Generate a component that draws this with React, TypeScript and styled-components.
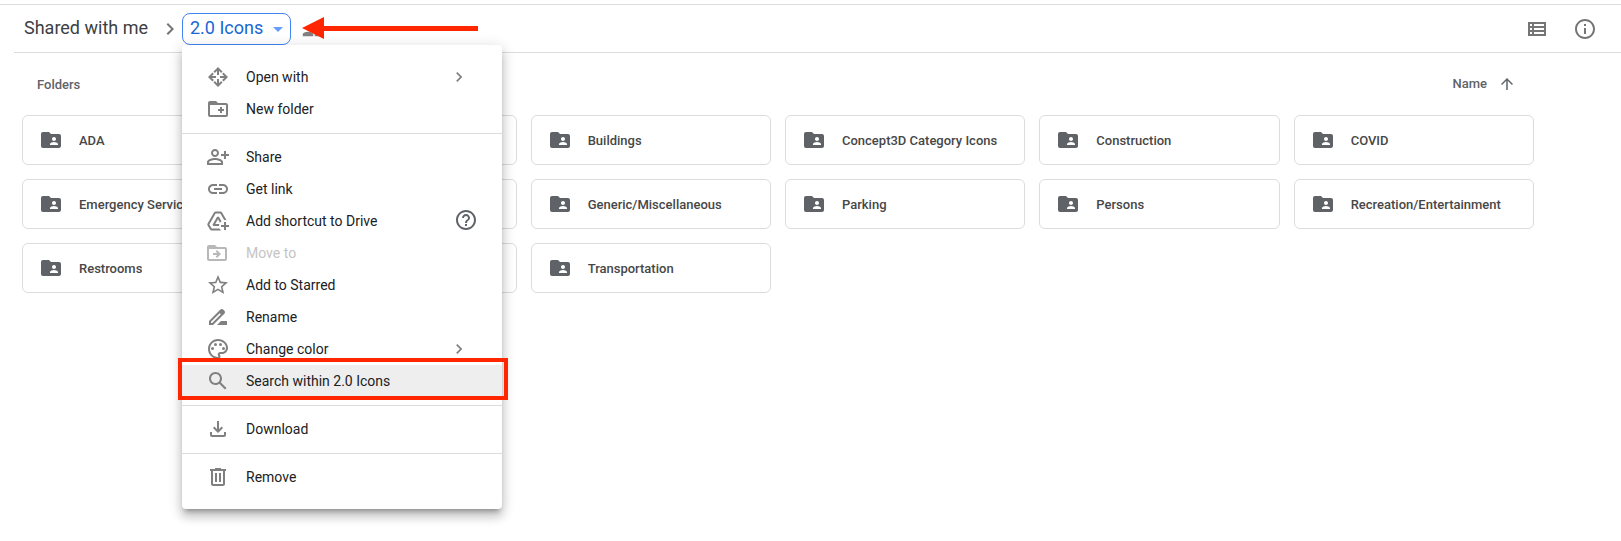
import React from 'react';
import styled, { createGlobalStyle, css } from 'styled-components';

const GlobalStyle = createGlobalStyle`
  *, *::before, *::after { box-sizing: border-box; }
  body {
    margin: 0;
    background: #fff;
    color: #202124;
    font-family: Roboto, "Liberation Sans", sans-serif;
    font-size: 14px;
  }
  button { font: inherit; color: inherit; background: none; border: 0; padding: 0; cursor: pointer; }
`;

const paths = {
  move: 'M12 2 7.5 6.5l1.4 1.4L11 5.8V10h2V5.8l2.1 2.1 1.4-1.4zM2 12l4.5 4.5 1.4-1.4L5.8 13H10v-2H5.8l2.1-2.1-1.4-1.4zM22 12l-4.5-4.5-1.4 1.4 2.1 2.1H14v2h4.2l-2.1 2.1 1.4 1.4zM12 22l4.5-4.5-1.4-1.4-2.1 2.1V14h-2v4.2l-2.1-2.1-1.4 1.4z',
  newFolder: 'M20 6h-8l-2-2H4c-1.1 0-2 .9-2 2v12c0 1.1.9 2 2 2h16c1.1 0 2-.9 2-2V8c0-1.1-.9-2-2-2zm0 12H4V8h16v10zm-8-4h2v2h2v-2h2v-2h-2v-2h-2v2h-2v2z',
  share: 'M9 12c2.21 0 4-1.79 4-4s-1.79-4-4-4-4 1.79-4 4 1.79 4 4 4zm0-6c1.1 0 2 .9 2 2s-.9 2-2 2-2-.9-2-2 .9-2 2-2zm0 7c-2.67 0-8 1.34-8 4v3h16v-3c0-2.66-5.33-4-8-4zm6 5H3v-.99C3.2 16.29 6.3 15 9 15s5.8 1.29 6 2v1zM20 9V6h-2v3h-3v2h3v3h2v-3h3V9z',
  link: 'M3.9 12c0-1.71 1.39-3.1 3.1-3.1h4V7H7c-2.76 0-5 2.24-5 5s2.24 5 5 5h4v-1.9H7c-1.71 0-3.1-1.39-3.1-3.1zM8 13h8v-2H8v2zm9-6h-4v1.9h4c1.71 0 3.1 1.39 3.1 3.1s-1.39 3.1-3.1 3.1h-4V17h4c2.76 0 5-2.24 5-5s-2.24-5-5-5z',
  shortcut: 'M20 21v-3h3v-2h-3v-3h-2v3h-3v2h3v3h2zm-4.97.5H5.66c-.72 0-1.38-.38-1.74-1L1.57 16.4c-.36-.62-.35-1.38.01-2L7.92 3.49C8.28 2.88 8.94 2.5 9.65 2.5h4.7c.71 0 1.37.38 1.73.99l4.48 7.71c-.5-.13-1.02-.2-1.56-.2-.28 0-.56.02-.84.06L14.35 4.5h-4.7L3.31 15.41l2.35 4.09h7.89c.35.77.85 1.44 1.48 2zM13.34 15C13.12 15.63 13 16.3 13 17H7.25l-.73-1.27 4.58-7.98h1.8l2.53 4.42c-.56.42-1.05.93-1.44 1.51l-2-3.49L9.25 15h4.09z',
  moveTo: 'M19 6h-8L9 4H3c-1.1 0-2 .9-2 2v12c0 1.1.9 2 2 2h16c1.1 0 2-.9 2-2V8c0-1.1-.9-2-2-2zm0 12H3V8h16v10zm-8-1 4-4-4-4-1.4 1.4 1.6 1.6H7v2h4.2l-1.6 1.6z',
  star: 'M22 9.24l-7.19-.62L12 2 9.19 8.63 2 9.24l5.46 4.73L5.82 21 12 17.27 18.18 21l-1.63-7.03L22 9.24zM12 15.4l-3.76 2.27 1-4.28-3.32-2.88 4.38-.38L12 6.1l1.71 4.04 4.38.38-3.32 2.88 1 4.28L12 15.4z',
  rename: 'M18.41 5.8 17.2 4.59c-.78-.78-2.05-.78-2.83 0l-2.68 2.68L3 15.96V20h4.04l8.74-8.74 2.63-2.63c.79-.78.79-2.05 0-2.83zM6.21 18H5v-1.21l8.66-8.66 1.21 1.21L6.21 18zM11 20l4-4h6v4H11z',
  palette: 'M12 22C6.49 22 2 17.51 2 12S6.49 2 12 2s10 4.04 10 9c0 3.31-2.69 6-6 6h-1.77c-.28 0-.5.22-.5.5 0 .12.05.23.13.33.41.47.64 1.06.64 1.67 0 1.38-1.12 2.5-2.5 2.5zm0-18c-4.41 0-8 3.59-8 8s3.59 8 8 8c.28 0 .5-.22.5-.5 0-.16-.08-.28-.14-.35-.41-.46-.63-1.05-.63-1.65 0-1.38 1.12-2.5 2.5-2.5H16c2.21 0 4-1.79 4-4 0-3.86-3.59-7-8-7zM6.5 10a1.5 1.5 0 1 0 0 3 1.5 1.5 0 0 0 0-3zM9.5 6a1.5 1.5 0 1 0 0 3 1.5 1.5 0 0 0 0-3zM14.5 6a1.5 1.5 0 1 0 0 3 1.5 1.5 0 0 0 0-3zM17.5 10a1.5 1.5 0 1 0 0 3 1.5 1.5 0 0 0 0-3z',
  search: 'M20.49 19l-5.73-5.73C15.53 12.2 16 10.91 16 9.5 16 5.91 13.09 3 9.5 3S3 5.91 3 9.5 5.91 16 9.5 16c1.41 0 2.7-.47 3.77-1.24L19 20.49 20.49 19zM5 9.5C5 7.01 7.01 5 9.5 5S14 7.01 14 9.5 11.99 14 9.5 14 5 11.99 5 9.5z',
  download: 'M4 15h2v3h12v-3h2v3c0 1.1-.9 2-2 2H6c-1.1 0-2-.9-2-2m11.59-8.41L13 12.17V4h-2v8.17L8.41 9.59 7 11l5 5 5-5-1.41-1.41z',
  remove: 'M15 4V3H9v1H4v2h1v13c0 1.1.9 2 2 2h10c1.1 0 2-.9 2-2V6h1V4h-5zm2 15H7V6h10v13zM9 8h2v9H9zm4 0h2v9h-2z',
  chevron: 'M10 6 8.59 7.41 13.17 12l-4.58 4.59L10 18l6-6z',
  help: 'M11 18h2v-2h-2v2zm1-16C6.48 2 2 6.48 2 12s4.48 10 10 10 10-4.48 10-10S17.52 2 12 2zm0 18c-4.41 0-8-3.59-8-8s3.59-8 8-8 8 3.59 8 8-3.59 8-8 8zm0-14c-2.21 0-4 1.79-4 4h2c0-1.1.9-2 2-2s2 .9 2 2c0 2-3 1.75-3 5h2c0-2.25 3-2.5 3-5 0-2.21-1.79-4-4-4z',
  info: 'M11 17h2v-6h-2v6zm1-15C6.48 2 2 6.48 2 12s4.48 10 10 10 10-4.48 10-10S17.52 2 12 2zm0 18c-4.41 0-8-3.59-8-8s3.59-8 8-8 8 3.59 8 8-3.59 8-8 8zM11 9h2V7h-2v2z',
  list: 'M3 5v14h18V5H3zm4 2v2H5V7h2zm-2 6v-2h2v2H5zm0 2h2v2H5v-2zm14 2H9v-2h10v2zm0-4H9v-2h10v2zm0-4H9V7h10v2z',
  up: 'M4 12l1.41 1.41L11 7.83V20h2V7.83l5.58 5.59L20 12l-8-8-8 8z',
  caret: 'M7 10l5 5 5-5z',
  people: 'M16 11c1.66 0 2.99-1.34 2.99-3S17.66 5 16 5c-1.66 0-3 1.34-3 3s1.34 3 3 3zm-8 0c1.66 0 2.99-1.34 2.99-3S9.66 5 8 5C6.34 5 5 6.34 5 8s1.34 3 3 3zm0 2c-2.33 0-7 1.17-7 3.5V19h14v-2.5c0-2.33-4.67-3.5-7-3.5zm8 0c-.29 0-.62.02-.97.05 1.16.84 1.97 1.97 1.97 3.45V19h6v-2.5c0-2.33-4.67-3.5-7-3.5z',
  sharedFolder: 'M20 6h-8l-2-2H4c-1.1 0-1.99.9-1.99 2L2 18c0 1.1.9 2 2 2h16c1.1 0 2-.9 2-2V8c0-1.1-.9-2-2-2zm-5 3c1.1 0 2 .9 2 2s-.9 2-2 2-2-.9-2-2 .9-2 2-2zm4 8h-8v-1c0-1.33 2.67-2 4-2s4 .67 4 2v1z',
};
type IconName = keyof typeof paths;

const Svg = styled.svg`
  display: block;
  flex: none;
  fill: currentColor;
`;
const Icon = ({ name, size = 24 }: { name: IconName; size?: number }) => (
  <Svg width={size} height={size} viewBox="0 0 24 24" aria-hidden="true">
    <path d={paths[name]} />
  </Svg>
);

const Page = styled.div`
  min-height: 100vh;
  padding-top: 4px;
`;
const Toolbar = styled.header`
  display: flex;
  align-items: center;
  justify-content: space-between;
  height: 49px;
  border-top: 1px solid #dadce0;
  padding-left: 14px;
  position: relative;
  &::after {
    content: '';
    position: absolute;
    left: 14px;
    right: 0;
    bottom: 0;
    border-bottom: 1px solid #dadce0;
  }
`;
const Breadcrumbs = styled.nav`
  display: flex;
  align-items: center;
  padding-left: 10px;
  color: #757575;
`;
const Crumb = styled.a`
  width: 134px;
  padding-bottom: 2px;
  color: #3c4043;
  font-size: 18px;
  line-height: 24px;
  text-decoration: none;
`;
const CrumbMenu = styled.div`
  position: relative;
  margin-right: 11px;
`;
const CurrentCrumb = styled.button`
  display: flex;
  align-items: center;
  justify-content: space-between;
  width: 109px;
  height: 32px;
  padding: 0 0 2px 7px;
  border: 1px solid #4285f4;
  border-radius: 8px;
  color: #1967d2;
  font-size: 18px;
  line-height: 24px;
  svg { margin-top: 2px; color: #669df6; }
`;
const SharedMark = styled.span`
  position: relative;
  padding-top: 4px;
  color: #808080;
`;
const Arrow = styled.svg`
  position: absolute;
  left: 0;
  top: -3px;
`;
const Tools = styled.div`
  display: flex;
  gap: 24px;
  padding-right: 24px;
  color: #757575;
`;

const Menu = styled.ul`
  position: absolute;
  z-index: 2;
  top: 32px;
  left: 0;
  width: 320px;
  margin: 0;
  padding: 16px 0;
  list-style: none;
  background: #fff;
  border-radius: 4px;
  box-shadow: 0 8px 10px 1px rgba(0, 0, 0, 0.14), 0 3px 14px 2px rgba(0, 0, 0, 0.12), 0 5px 5px -3px rgba(0, 0, 0, 0.3);
`;
const MenuRow = styled.li<{ $marked?: boolean }>`
  position: relative;
  ${(p) =>
    p.$marked &&
    css`
      background: #eee;
      &::after {
        content: '';
        position: absolute;
        inset: -7px -6px -3px -4px;
        border: 4px solid #ff2600;
      }
    `}
`;
const MenuButton = styled.button`
  display: flex;
  align-items: center;
  width: 100%;
  height: 32px;
  padding: 0 24px;
  gap: 16px;
  color: #202124;
  line-height: 20px;
  text-align: left;
  svg { color: #808080; }
  &:disabled { color: #c4c4c4; }
  &:disabled svg { color: #b8b8b8; }
`;
const MenuLabel = styled.span`
  flex: 1;
`;
const Trailing = styled.span<{ $help?: boolean }>`
  ${(p) => (p.$help ? 'padding-bottom: 2px; svg { color: #5f6368; }' : 'padding-right: 9px;')}
`;
const Divider = styled.li`
  height: 1px;
  margin: 8px 0 7px;
  background: #dadce0;
`;

const Content = styled.main`
  padding: 0 87px 0 22px;
`;
const ListHeader = styled.div`
  display: flex;
  align-items: center;
  justify-content: space-between;
  height: 62px;
  padding: 0 18px 0 15px;
  color: #5f6368;
  font-size: 13px;
  line-height: 20px;
  font-weight: 500;
`;
const Heading = styled.h2`
  margin: 0;
  padding-top: 2px;
  font: inherit;
`;
const SortButton = styled.button`
  display: flex;
  align-items: center;
  gap: 11px;
`;
const Grid = styled.div`
  display: grid;
  grid-template-columns: repeat(6, 1fr);
  gap: 14px;
`;
const Card = styled.button`
  display: flex;
  align-items: center;
  gap: 16px;
  height: 50px;
  padding: 0 16px;
  border: 1px solid #dadce0;
  border-radius: 6px;
  color: #5f6368;
  text-align: left;
`;
const CardName = styled.span`
  overflow: hidden;
  padding-top: 2px;
  white-space: nowrap;
  text-overflow: ellipsis;
  color: #474747;
  font-size: 13px;
  line-height: 20px;
  font-weight: 500;
`;

type Item = { icon: IconName; label: string; trailing?: IconName; disabled?: boolean; marked?: boolean };
const groups: Item[][] = [
  [
    { icon: 'move', label: 'Open with', trailing: 'chevron' },
    { icon: 'newFolder', label: 'New folder' },
  ],
  [
    { icon: 'share', label: 'Share' },
    { icon: 'link', label: 'Get link' },
    { icon: 'shortcut', label: 'Add shortcut to Drive', trailing: 'help' },
    { icon: 'moveTo', label: 'Move to', disabled: true },
    { icon: 'star', label: 'Add to Starred' },
    { icon: 'rename', label: 'Rename' },
    { icon: 'palette', label: 'Change color', trailing: 'chevron' },
    { icon: 'search', label: 'Search within 2.0 Icons', marked: true },
  ],
  [{ icon: 'download', label: 'Download' }],
  [{ icon: 'remove', label: 'Remove' }],
];

// The second column sits behind the open menu, so its cards carry no name.
const folders = [
  'ADA', '', 'Buildings', 'Concept3D Category Icons', 'Construction', 'COVID',
  'Emergency Services', '', 'Generic/Miscellaneous', 'Parking', 'Persons', 'Recreation/Entertainment',
  'Restrooms', '', 'Transportation',
];

export default function App() {
  return (
    <Page>
      <GlobalStyle />
      <Toolbar>
        <Breadcrumbs aria-label="Breadcrumb">
          <Crumb href="#shared">Shared with me</Crumb>
          <Icon name="chevron" />
          <CrumbMenu>
            <CurrentCrumb aria-haspopup="menu" aria-expanded="true">
              2.0 Icons
              <Icon name="caret" />
            </CurrentCrumb>
            <Menu>
              {groups.map((group, g) => (
                <React.Fragment key={g}>
                  {g > 0 && <Divider role="separator" />}
                  {group.map((item) => (
                    <MenuRow key={item.label} $marked={item.marked}>
                      <MenuButton disabled={item.disabled}>
                        <Icon name={item.icon} />
                        <MenuLabel>{item.label}</MenuLabel>
                        {item.trailing && (
                          <Trailing $help={item.trailing === 'help'}>
                            <Icon name={item.trailing} size={item.trailing === 'help' ? 24 : 20} />
                          </Trailing>
                        )}
                      </MenuButton>
                    </MenuRow>
                  ))}
                </React.Fragment>
              ))}
            </Menu>
          </CrumbMenu>
          <SharedMark>
            <Icon name="people" size={18} />
            <Arrow width="184" height="26" viewBox="0 0 184 26" aria-hidden="true">
              <path d="M0 13 22 2v9h154v5H22v8z" fill="#ff2600" />
            </Arrow>
          </SharedMark>
        </Breadcrumbs>
        <Tools>
          <button aria-label="List view"><Icon name="list" /></button>
          <button aria-label="View details"><Icon name="info" /></button>
        </Tools>
      </Toolbar>
      <Content>
        <ListHeader>
          <Heading>Folders</Heading>
          <SortButton>
            Name
            <Icon name="up" size={18} />
          </SortButton>
        </ListHeader>
        <Grid>
          {folders.map((name, i) => (
            <Card key={i}>
              <Icon name="sharedFolder" />
              <CardName>{name}</CardName>
            </Card>
          ))}
        </Grid>
      </Content>
    </Page>
  );
}
